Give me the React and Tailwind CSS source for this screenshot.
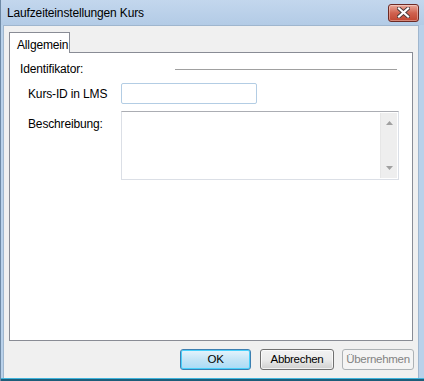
const font = { fontFamily: '"Liberation Sans", Arial, sans-serif' };

function CloseButton() {
    return (
        <div className="w-[31px] h-[18px] rounded-[3px] border border-[#6d2a24] bg-gradient-to-b from-[#e9a99b] via-[#d0624f] to-[#c04530] flex items-center justify-center shadow-[inset_0_0_0_1px_rgba(255,255,255,0.35)]">
            <svg width="13" height="11" viewBox="0 0 13 11">
                <path d="M2 1.5 L11 9.5 M11 1.5 L2 9.5" stroke="#4a3a3a" strokeWidth="4" strokeLinecap="square" />
                <path d="M2 1.5 L11 9.5 M11 1.5 L2 9.5" stroke="#ffffff" strokeWidth="2.2" strokeLinecap="square" />
            </svg>
        </div>
    );
}

function Triangle({ up }) {
    return (
        <svg width="7" height="4" viewBox="0 0 7 4">
            <path d={up ? 'M0 4 L3.5 0 L7 4 Z' : 'M0 0 L3.5 4 L7 0 Z'} fill="#a0a0a0" />
        </svg>
    );
}

export default function App() {
    return (
        <div style={font} className="w-[424px] h-[381px] flex flex-col bg-[#b9d1ea] border-l border-[#6f8aa6] text-[12px] tracking-[-0.15px] text-black overflow-hidden">
            {/* Title bar */}
            <div className="h-[25px] shrink-0 flex items-center pl-[6px] pr-[5px] bg-gradient-to-b from-[#c3d7ed] to-[#b3cbe6]">
                <p className="flex-1 text-[12px] leading-none pt-[1px]">Laufzeiteinstellungen Kurs</p>
                <CloseButton />
            </div>

            {/* Client area */}
            <div className="flex-1 flex flex-col ml-[2px] mr-[5px] bg-[#f0f0f0] border border-[#9fb6ce] border-b-0">
                <div className="pt-[6px] pl-[5px] pr-[5px]">
                    {/* Tab */}
                    <div className="flex">
                        <div className="w-[61px] h-[21px] bg-white border border-b-0 border-[#898c95] pl-[7px] pt-[3px] relative -mb-px z-10">
                            Allgemein
                        </div>
                    </div>

                    {/* Panel */}
                    <div className="h-[289px] bg-white border border-[#898c95] flex flex-col">
                        <div className="flex items-center pl-[10px] pr-[15px] pt-[8px] h-[24px]">
                            <span className="w-[155px]">Identifikator:</span>
                            <div className="flex-1 h-px bg-[#a0a0a0]" />
                        </div>

                        <div className="flex items-center pl-[18px] mt-[6px]">
                            <span className="w-[93px]">Kurs-ID in LMS</span>
                            <div className="w-[136px] h-[21px] border border-[#b3cde4] rounded-[2px] bg-white" />
                        </div>

                        <div className="flex items-start pl-[18px] mt-[7px]">
                            <span className="w-[93px] pt-[4px]">Beschreibung:</span>
                            <div className="w-[278px] h-[69px] border border-[#dbdfe6] border-t-[#abadb3] bg-white flex justify-end p-[1px]">
                                <div className="w-[17px] h-full bg-[#eeeeee] border-l border-[#e6e6e6] flex flex-col items-center justify-between py-[8px]">
                                    <Triangle up />
                                    <Triangle />
                                </div>
                            </div>
                        </div>
                    </div>
                </div>

                {/* Buttons */}
                <div className="flex justify-end pr-[4px] mt-[8px] text-[11.5px] tracking-[-0.3px]">
                    <button style={font} className="w-[71px] h-[21px] rounded-[3px] border border-[#3c7fb1] bg-gradient-to-b from-[#e5f4fc] via-[#c4e5f6] to-[#a9dbf6] shadow-[inset_0_0_0_1px_#48d0fb]">
                        OK
                    </button>
                    <button style={font} className="ml-[9px] w-[74px] h-[21px] rounded-[3px] border border-[#707070] bg-gradient-to-b from-[#f2f2f2] via-[#ebebeb] to-[#cfcfcf] shadow-[inset_0_0_0_1px_rgba(255,255,255,0.7)]">
                        Abbrechen
                    </button>
                    <button style={font} disabled className="ml-[8px] w-[72px] h-[21px] rounded-[3px] border border-[#adb2b5] bg-[#f4f4f4] text-[#838383]">
                        Übernehmen
                    </button>
                </div>
            </div>

            {/* Bottom frame */}
            <div className="h-[3px] shrink-0 border-t border-[#3fb4dc] bg-[#1d5d7a]" />
        </div>
    );
}
